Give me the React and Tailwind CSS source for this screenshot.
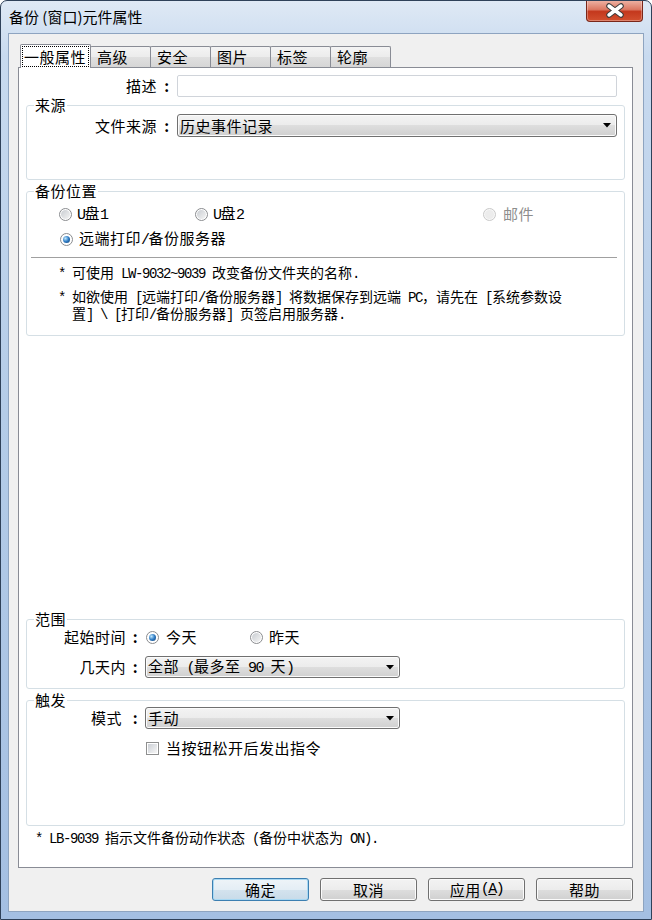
const cjk = "font-['Noto_Sans_CJK_SC',sans-serif]";

const M = ({ children }) => (
  <span className="font-['Liberation_Mono',monospace] tracking-[-0.1em]">{children}</span>
);

const Radio = ({ checked, disabled }) => (
  <span
    className={`flex items-center justify-center w-[13px] h-[13px] shrink-0 rounded-full border ${
      disabled ? "border-[#c9c9c9] bg-[#f7f7f7]" : "border-[#8a8c8f] bg-white"
    }`}
  >
    {checked ? (
      <span className="w-[7px] h-[7px] rounded-full bg-[radial-gradient(circle_at_35%_35%,#bfe8ff,#2f7cc4_50%,#0f3a6d)]" />
    ) : (
      <span
        className={`w-[9px] h-[9px] rounded-full ${
          disabled ? "bg-[#ececec]" : "bg-[linear-gradient(135deg,#c9cdd2,#f4f4f4)]"
        }`}
      />
    )}
  </span>
);

const Check = () => (
  <span className="flex items-center justify-center w-[13px] h-[13px] shrink-0 border border-[#8e8f8f] bg-white">
    <span className="w-[9px] h-[9px] bg-[linear-gradient(135deg,#cbcfd5,#f6f6f6)]" />
  </span>
);

const Select = ({ className, children }) => (
  <div
    className={`${className} shrink-0 flex items-center justify-between rounded-[3px] border border-[#707070] bg-[linear-gradient(180deg,#f3f3f3_0%,#ececec_50%,#dedede_50%,#d0d0d0_100%)] shadow-[inset_0_0_0_1px_#fbfbfb] pl-[2px] pr-[5px] text-[15px] leading-[20px] tracking-[0.5px]`}
  >
    <span className="whitespace-nowrap">{children}</span>
    <svg width="8" height="5" viewBox="0 0 8 5">
      <path d="M0 0H8L4 4.5Z" fill="#000" />
    </svg>
  </div>
);

const Btn = ({ primary, children }) => (
  <div
    className={`w-[97px] h-[23px] flex items-center justify-center rounded-[3px] border text-[15px] leading-[20px] tracking-[0.5px] ${
      primary
        ? "border-[#3c7fb1] bg-[linear-gradient(180deg,#eef4f8_0%,#e4eef5_50%,#d4e3ee_50%,#c8dbe9_100%)] shadow-[inset_0_0_0_1px_#a7d8f3]"
        : "border-[#707070] bg-[linear-gradient(180deg,#f3f3f3_0%,#ececec_50%,#dedede_50%,#d0d0d0_100%)] shadow-[inset_0_0_0_1px_#fbfbfb]"
    }`}
  >
    {children}
  </div>
);

const Group = ({ title, className, children }) => (
  <fieldset className={`ml-[7px] w-[599px] shrink-0 rounded-[3px] border border-[#d5dfe5] ${className}`}>
    <legend className="ml-[7px] px-[1px] text-[15px] leading-[16px] tracking-[0.5px]">{title}</legend>
    {children}
  </fieldset>
);

const Colon = ({ className }) => (
  <span className={`${className} shrink-0 text-center font-semibold`}>:</span>
);

export default function App() {
  const tabs = ["高级", "安全", "图片", "标签", "轮廓"];

  return (
    <div
      className={`${cjk} w-[652px] h-[920px] overflow-hidden rounded-t-[7px] border border-[#2f4159] bg-[linear-gradient(180deg,#dfe9f5_0%,#c8daef_6%,#b4cce8_45%,#a4bfe2_100%)] text-black flex flex-col`}
    >
      {/* title bar */}
      <div className="relative h-[32px] shrink-0 flex items-center pl-[8px]">
        <span className="text-[15px] leading-[20px] pb-[1px]">备份 (窗口)元件属性</span>
        <div className="absolute top-[-1px] right-[8px] w-[57px] h-[22px] rounded-b-[4px] border border-t-0 border-[#7a2619] bg-[linear-gradient(180deg,#efb6a8_0%,#dc7863_45%,#c4381d_55%,#d2502f_100%)] shadow-[inset_0_0_0_1px_rgba(255,255,255,0.3)] flex items-center justify-center">
          <svg width="20" height="15" viewBox="0 0 20 15">
            <path d="M4 3L16 12M16 3L4 12" stroke="#3a3a3a" strokeWidth="5.5" strokeLinecap="round" />
            <path d="M4 3L16 12M16 3L4 12" stroke="#fff" strokeWidth="3.5" strokeLinecap="round" />
          </svg>
        </div>
      </div>

      {/* client area */}
      <div className="mx-[7px] h-[879px] shrink-0 border border-[#8ea4c0] bg-[#f0f0f0] flex flex-col">
        <div className="relative z-10 mt-[10px] ml-[11px] flex items-start h-[23px]">
          <div className="relative z-10 h-[24px] w-[71px] border border-b-0 border-[#898c95] bg-white rounded-t-[2px]">
            <div className="mx-[1px] mt-[1px] h-[21px] border border-dotted border-black pl-[1px] text-[15px] leading-[19px] tracking-[0.5px]">
              一般属性
            </div>
          </div>
          {tabs.map((t) => (
            <div
              key={t}
              className="-ml-[1px] mt-[2px] h-[21px] w-[61px] rounded-t-[2px] border border-b-0 border-[#898c95] bg-[linear-gradient(180deg,#f4f4f4_0%,#ececec_50%,#e0e0e0_50%,#d6d6d6_100%)] pl-[6px] text-[15px] leading-[19px] tracking-[0.5px]"
            >
              {t}
            </div>
          ))}
        </div>

        {/* tab panel */}
        <div className="ml-[9px] w-[615px] h-[801px] shrink-0 border border-[#898c95] bg-white flex flex-col text-[15px] leading-[20px] tracking-[0.5px]">
          <div className="mt-[7px] h-[22px] flex items-center">
            <span className="w-[138px] shrink-0 text-right">描述</span>
            <Colon className="w-[20px]" />
            <div className="w-[440px] h-[22px] rounded-[2px] border border-[#d0d4da] bg-white" />
          </div>

          <Group title="来源" className="h-[83px]">
            <div className="mt-[1px] h-[23px] flex items-center">
              <span className="w-[130px] shrink-0 text-right">文件来源</span>
              <Colon className="w-[20px]" />
              <Select className="w-[440px] h-[23px]">历史事件记录</Select>
            </div>
          </Group>

          <Group title="备份位置" className="mt-[3px] h-[153px]">
            <div className="mt-[5px] h-[20px] flex items-center pl-[32px]">
              <div className="w-[136px] flex items-center gap-[5px]">
                <Radio />
                <span>
                  <M>U</M>盘<M>1</M>
                </span>
              </div>
              <div className="w-[288px] flex items-center gap-[5px]">
                <Radio />
                <span>
                  <M>U</M>盘<M>2</M>
                </span>
              </div>
              <div className="flex items-center gap-[7px] text-[#8d8d8d]">
                <Radio disabled />
                <span>邮件</span>
              </div>
            </div>
            <div className="mt-[5px] h-[20px] flex items-center gap-[6px] pl-[33px]">
              <Radio checked />
              <span>
                远端打印<M>/</M>备份服务器
              </span>
            </div>
            <div className="mt-[8px] ml-[4px] w-[586px] border-t border-b border-t-[#a0a0a0] border-b-white" />
            <div className="ml-[31px] text-[14px] leading-[15px] tracking-normal">
              <div className="mt-[6px] flex">
                <span className="w-[14px] shrink-0">
                  <M>*</M>
                </span>
                <span className="whitespace-nowrap">
                  可使用<M> LW-9032~9039 </M>改变备份文件夹的名称<M>.</M>
                </span>
              </div>
              <div className="mt-[7px] flex">
                <span className="w-[14px] shrink-0">
                  <M>*</M>
                </span>
                <span className="whitespace-nowrap">
                  如欲使用<M> [</M>远端打印<M>/</M>备份服务器<M>] </M>将数据保存到远端<M> PC</M>，请先在<M> [</M>系统参数设
                  <br />
                  置<M>] \ [</M>打印<M>/</M>备份服务器<M>] </M>页签启用服务器<M>.</M>
                </span>
              </div>
            </div>
          </Group>

          <div className="flex-1" />

          <Group title="范围" className="h-[78px]">
            <div className="h-[20px] flex items-center">
              <span className="w-[99px] shrink-0 text-right">起始时间</span>
              <Colon className="w-[19px]" />
              <div className="ml-[1px] w-[104px] flex items-center gap-[7px]">
                <Radio checked />
                <span>今天</span>
              </div>
              <div className="flex items-center gap-[6px]">
                <Radio />
                <span>昨天</span>
              </div>
            </div>
            <div className="mt-[9px] h-[22px] flex items-center">
              <span className="w-[99px] shrink-0 text-right">几天内</span>
              <Colon className="w-[19px]" />
              <Select className="w-[255px] h-[22px]">
                全部<M> (</M>最多至<M> 90 </M>天<M>)</M>
              </Select>
            </div>
          </Group>

          <Group title="触发" className="mt-[3px] h-[134px]">
            <div className="-mt-[1px] h-[22px] flex items-center">
              <span className="w-[99px] shrink-0 text-right pr-[4px]">模式</span>
              <Colon className="w-[19px]" />
              <Select className="w-[255px] h-[22px]">手动</Select>
            </div>
            <div className="mt-[9px] h-[20px] flex items-center gap-[7px] pl-[119px]">
              <Check />
              <span>当按钮松开后发出指令</span>
            </div>
          </Group>

          <div className="mt-[4px] mb-[22px] ml-[16px] h-[15px] text-[14px] leading-[15px] tracking-normal whitespace-nowrap">
            <M>* LB-9039 </M>指示文件备份动作状态<M> (</M>备份中状态为<M> ON).</M>
          </div>
        </div>

        {/* buttons */}
        <div className="mt-[10px] pr-[10px] flex justify-end gap-[11px]">
          <Btn primary>确定</Btn>
          <Btn>取消</Btn>
          <Btn>
            应用
            <M>
              (<span className="underline">A</span>)
            </M>
          </Btn>
          <Btn>帮助</Btn>
        </div>
      </div>
    </div>
  );
}
